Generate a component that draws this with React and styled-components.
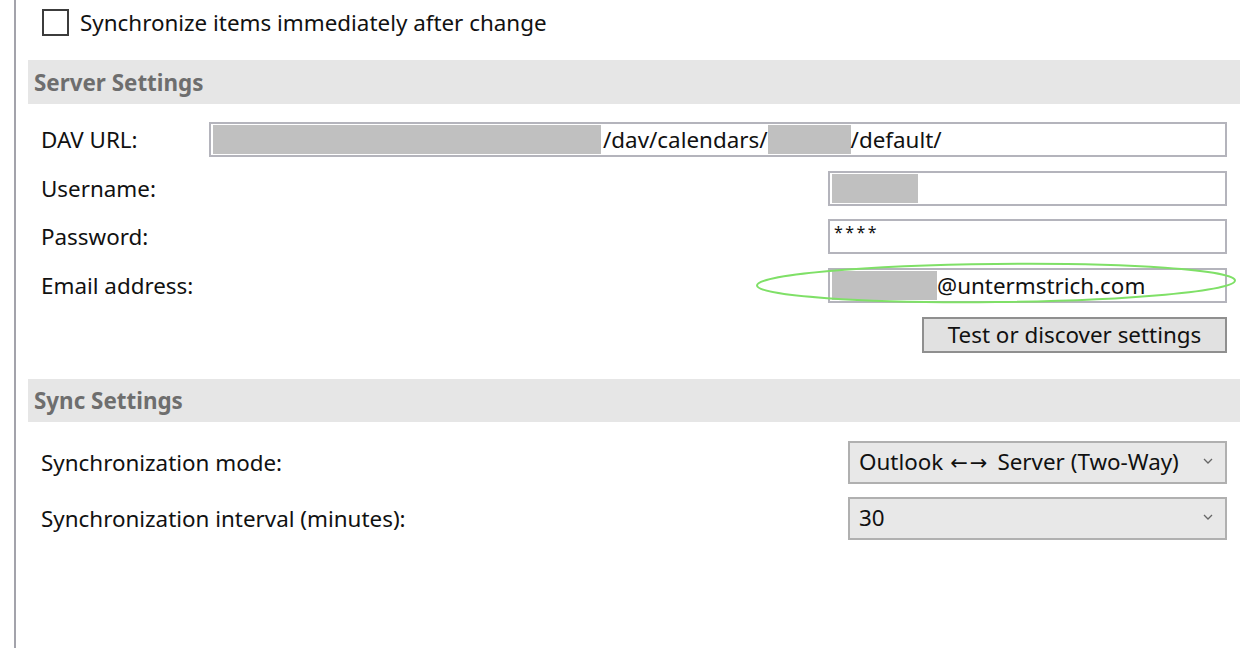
import React from "react";
import styled, { createGlobalStyle } from "styled-components";

const Global = createGlobalStyle`
  html, body { margin: 0; padding: 0; background: #fff; }
  body { font-family: "Noto Sans", "Open Sans", sans-serif; color: #111; }
  * { box-sizing: border-box; }
`;

const Page = styled.div`
  width: 1250px;
  height: 648px;
  overflow: hidden;
  padding-left: 14px;
  padding-right: 10px;
`;

const Panel = styled.div`
  height: 100%;
  border-left: 2px solid #a3a3ab;
  padding-left: 12px;
  display: flex;
  flex-direction: column;
  font-size: 22.4px;
`;

const CheckRow = styled.label`
  display: flex;
  gap: 11px;
  padding: 9px 0 0 14px;
  height: 45px;
  align-items: flex-start;
`;

const Box = styled.span`
  width: 27px;
  height: 27px;
  border: 2px solid #3c3c3c;
  background: #fff;
  flex: none;
`;

const CheckText = styled.span`
  line-height: 27px;
`;

const Header = styled.div`
  height: ${(p) => p.$h}px;
  margin-top: ${(p) => p.$mt}px;
  background: #e6e6e6;
  color: #6e6e6e;
  font-weight: 700;
  display: flex;
  align-items: center;
  padding-left: 6px;
`;

const Form = styled.div`
  display: flex;
  flex-direction: column;
  gap: ${(p) => p.$gap}px;
  margin-top: ${(p) => p.$mt}px;
  padding: 0 13px;
`;

const Row = styled.div`
  position: relative;
  display: flex;
  align-items: center;
  justify-content: space-between;
  height: ${(p) => p.$h || 35}px;
`;

const Label = styled.span`
  white-space: nowrap;
`;

const Input = styled.div`
  position: relative;
  width: ${(p) => p.$w}px;
  height: 35px;
  border: 2px solid #b4b4bc;
  background: #fff;
  display: flex;
  align-items: center;
  padding: 0 2px;
  white-space: nowrap;
  overflow: hidden;
`;

const Redact = styled.span`
  display: inline-block;
  width: ${(p) => p.$w}px;
  height: 29px;
  background: #c0c0c0;
  flex: none;
  margin-right: ${(p) => p.$mr || 0}px;
`;

const Pw = styled.span`
  font-size: 16px;
  letter-spacing: 2.4px;
  margin-top: -9px;
  margin-left: 2px;
`;

const ButtonRow = styled.div`
  display: flex;
  justify-content: flex-end;
`;

const Button = styled.button`
  width: 305px;
  height: 36px;
  background: #e1e1e1;
  border: 2px solid #8f8f8f;
  font: inherit;
  color: #111;
  padding: 0 0 1px;
`;

const Select = styled.div`
  width: 379px;
  height: 43px;
  background: #e8e8e8;
  border: 2px solid #b0b0b0;
  display: flex;
  align-items: center;
  justify-content: space-between;
  padding: 0 12px 2px 9px;
`;

const Arrows = styled.span`
  font-family: "DejaVu Sans", sans-serif;
  font-size: 21px;
  letter-spacing: 2px;
  margin: 0 8px 0 7px;
`;

const Ellipse = styled.svg`
  position: absolute;
  left: 714px;
  top: -8px;
  width: 482px;
  height: 46px;
  overflow: visible;
  pointer-events: none;
`;

const Chevron = () => (
  <svg width="10" height="7" viewBox="0 0 10 7">
    <path d="M1 1 L5 5 L9 1" fill="none" stroke="#666" strokeWidth="1.3" />
  </svg>
);

export default function App() {
  return (
    <>
      <Global />
      <Page>
        <Panel>
          <CheckRow>
            <Box />
            <CheckText>Synchronize items immediately after change</CheckText>
          </CheckRow>

          <Header $h={44} $mt={15}>Server Settings</Header>

          <Form $gap={13.7} $mt={18}>
            <Row>
              <Label>DAV URL:</Label>
              <Input $w={1018}>
                <Redact $w={388} $mr={2} />
                <span>/dav/calendars/</span>
                <Redact $w={83} />
                <span>/default/</span>
              </Input>
            </Row>
            <Row>
              <Label>Username:</Label>
              <Input $w={399}>
                <Redact $w={86} />
              </Input>
            </Row>
            <Row>
              <Label>Password:</Label>
              <Input $w={399}>
                <Pw>****</Pw>
              </Input>
            </Row>
            <Row>
              <Label>Email address:</Label>
              <Input $w={399}>
                <Redact $w={105} />
                <span>@untermstrich.com</span>
              </Input>
              <Ellipse viewBox="0 0 482 46">
                <ellipse
                  cx="241"
                  cy="23"
                  rx="239"
                  ry="19"
                  fill="none"
                  stroke="#7fe067"
                  strokeWidth="2"
                  transform="rotate(-0.6 241 23)"
                />
              </Ellipse>
            </Row>
            <ButtonRow>
              <Button>Test or discover settings</Button>
            </ButtonRow>
          </Form>

          <Header $h={43} $mt={26}>Sync Settings</Header>

          <Form $gap={13} $mt={19}>
            <Row $h={43}>
              <Label>Synchronization mode:</Label>
              <Select>
                <span>
                  Outlook<Arrows>←→</Arrows>Server (Two-Way)
                </span>
                <Chevron />
              </Select>
            </Row>
            <Row $h={43}>
              <Label>Synchronization interval (minutes):</Label>
              <Select>
                <span>30</span>
                <Chevron />
              </Select>
            </Row>
          </Form>
        </Panel>
      </Page>
    </>
  );
}
